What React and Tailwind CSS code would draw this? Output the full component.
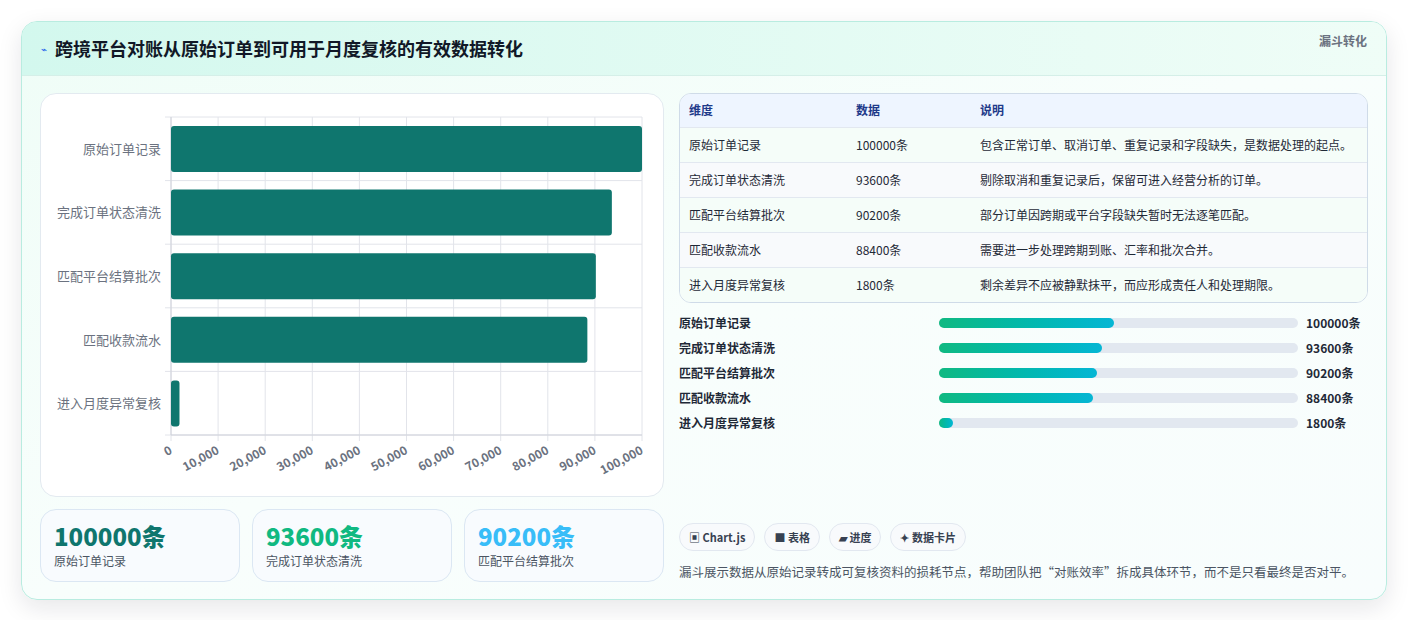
import React from 'react';

const rows = [
  { name: '原始订单记录', value: 100000, note: '包含正常订单、取消订单、重复记录和字段缺失，是数据处理的起点。', pct: 48.7 },
  { name: '完成订单状态清洗', value: 93600, note: '剔除取消和重复记录后，保留可进入经营分析的订单。', pct: 45.4 },
  { name: '匹配平台结算批次', value: 90200, note: '部分订单因跨期或平台字段缺失暂时无法逐笔匹配。', pct: 44 },
  { name: '匹配收款流水', value: 88400, note: '需要进一步处理跨期到账、汇率和批次合并。', pct: 42.9 },
  { name: '进入月度异常复核', value: 1800, note: '剩余差异不应被静默抹平，而应形成责任人和处理期限。', pct: 4 },
];

const font = { fontFamily: '"Noto Sans CJK SC", "Noto Sans", sans-serif' };

const Chart = () => {
  const x0 = 130, w = 471, y0 = 23, h = 318;
  const rowH = h / 5;
  return (
    <svg width="623" height="402" className="block">
      {Array.from({ length: 11 }).map((_, i) => (
        <line key={i} x1={x0 + (w * i) / 10} x2={x0 + (w * i) / 10} y1={y0} y2={y0 + h + 6} stroke="#e2e4ea" />
      ))}
      {Array.from({ length: 6 }).map((_, i) => (
        <line key={i} x1={x0 - 6} x2={x0 + w} y1={y0 + rowH * i} y2={y0 + rowH * i} stroke="#e2e4ea" />
      ))}
      <line x1={x0} x2={x0} y1={y0} y2={y0 + h} stroke="#cfd2da" />
      <line x1={x0} x2={x0 + w} y1={y0 + h} y2={y0 + h} stroke="#cfd2da" />
      {rows.map((r, i) => (
        <g key={r.name}>
          <rect x={x0} y={y0 + rowH * i + 9} width={Math.max((w * r.value) / 100000, 8)} height={46} rx="3" fill="#0f766e" />
          <text x={x0 - 10} y={y0 + rowH * i + rowH / 2 + 5} textAnchor="end" fontSize="13" fill="#6b7280" style={font}>{r.name}</text>
        </g>
      ))}
      {Array.from({ length: 11 }).map((_, i) => {
        const x = x0 + (w * i) / 10;
        return (
          <text key={i} x={x + 2} y={y0 + h + 18} textAnchor="end" fontSize="12" fontWeight="700" fill="#6b7280"
            transform={`rotate(-28 ${x + 2} ${y0 + h + 18})`} style={font}>
            {i === 0 ? '0' : (i * 10000).toLocaleString('en-US')}
          </text>
        );
      })}
    </svg>
  );
};

export default function App() {
  return (
    <div className="min-h-[620px] bg-white p-[21px]" style={font}>
      <div className="rounded-2xl border border-[#b9ece0] bg-gradient-to-br from-[#effdf7] via-[#f8fefc] to-[#f8fdfd] shadow-[0_8px_24px_rgba(15,23,42,0.10)] overflow-hidden">
        <div className="flex h-[54px] items-center justify-between border-b border-[#d5efe8] bg-gradient-to-r from-[#d3f8ee] to-[#effdf7] px-[19px]">
          <div className="flex items-center gap-2">
            <span className="text-[10px] text-[#2563eb]">⌁</span>
            <h1 className="text-[18px] font-bold text-[#111827]">跨境平台对账从原始订单到可用于月度复核的有效数据转化</h1>
          </div>
          <span className="-mt-4 text-[12px] font-bold text-[#6b7280]">漏斗转化</span>
        </div>
        <div className="flex gap-[15px] px-[18px] pt-[17px] pb-[17px]">
          <div className="flex w-[624px] flex-col gap-[12px]">
            <div className="rounded-2xl border border-[#e3eaf0] bg-white">
              <Chart />
            </div>
            <div className="grid grid-cols-3 gap-[12px]">
              {[['100000条', '原始订单记录', 'text-[#0f766e]'], ['93600条', '完成订单状态清洗', 'text-[#10b981]'], ['90200条', '匹配平台结算批次', 'text-[#38bdf8]']].map(([v, l, c]) => (
                <div key={l} className="h-[73px] rounded-2xl border border-[#dbe7f3] bg-[#f8fbfe] px-[13px] pt-[10px]">
                  <div className={`text-[24px] font-extrabold leading-[32px] ${c}`}>{v}</div>
                  <div className="text-[12px] text-[#4b5563]">{l}</div>
                </div>
              ))}
            </div>
          </div>
          <div className="flex flex-1 flex-col">
            <div className="overflow-hidden rounded-xl border border-[#cfdbe8] bg-white">
              <table className="w-full text-left text-[12px]">
                <thead className="bg-[#eef5ff] text-[#1e3a8a]">
                  <tr className="h-[33px]">
                    <th className="w-[176px] pl-[9px] font-bold">维度</th>
                    <th className="w-[124px] font-bold">数据</th>
                    <th className="font-bold">说明</th>
                  </tr>
                </thead>
                <tbody className="text-[#1f2937]">
                  {rows.map((r, i) => (
                    <tr key={r.name} className={`h-[35px] border-t border-[#e2e8f0] ${i % 2 ? 'bg-[#f8fafc]' : 'bg-[#f5fdf9]'}`}>
                      <td className="pl-[9px]">{r.name}</td>
                      <td>{r.value}条</td>
                      <td>{r.note}</td>
                    </tr>
                  ))}
                </tbody>
              </table>
            </div>
            <div className="mt-[10px] flex flex-col gap-[6px]">
              {rows.map((r) => (
                <div key={r.name} className="flex h-[19px] items-center text-[12px] font-bold text-[#1f2937]">
                  <span className="w-[260px]">{r.name}</span>
                  <div className="h-[10px] w-[359px] rounded-full bg-[#e2e8f0]">
                    <div className="h-full rounded-full bg-gradient-to-r from-[#10b981] to-[#06b6d4]" style={{ width: `${r.pct}%` }} />
                  </div>
                  <span className="ml-[8px]">{r.value}条</span>
                </div>
              ))}
            </div>
            <div className="mt-auto flex gap-[9px]">
              {['▣ Chart.js', '■ 表格', '▰ 进度', '✦ 数据卡片'].map((t) => (
                <span key={t} className="flex h-[28px] items-center rounded-full border border-[#e2e8f0] bg-[#f8fafc] px-[9px] text-[11px] font-bold text-[#374151]">{t}</span>
              ))}
            </div>
            <p className="mt-[12px] text-[12.5px] text-[#4b5563]">漏斗展示数据从原始记录转成可复核资料的损耗节点，帮助团队把“对账效率”拆成具体环节，而不是只看最终是否对平。</p>
          </div>
        </div>
      </div>
    </div>
  );
}
